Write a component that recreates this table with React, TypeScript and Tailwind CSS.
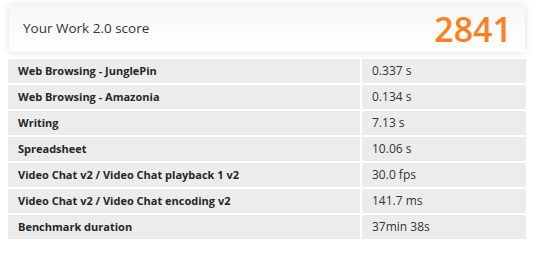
import React from "react";

const rows: [string, string][] = [
  ["Web Browsing - JunglePin", "0.337 s"],
  ["Web Browsing - Amazonia", "0.134 s"],
  ["Writing", "7.13 s"],
  ["Spreadsheet", "10.06 s"],
  ["Video Chat v2 / Video Chat playback 1 v2", "30.0 fps"],
  ["Video Chat v2 / Video Chat encoding v2", "141.7 ms"],
  ["Benchmark duration", "37min 38s"],
];

export default function App() {
  return (
    <div
      className="w-[537px] h-[253px] bg-white pt-[5px] overflow-hidden"
      style={{ fontFamily: '"Open Sans", sans-serif' }}
    >
      <div className="ml-[9px] w-[516px] h-[47px] rounded-[3px] bg-gradient-to-b from-[#f7f7f7] to-white shadow-[0_0_8px_rgba(0,0,0,0.13)] flex items-center justify-between pl-[14px] pr-[13px]">
        <span className="text-[13.5px] text-[#333333]">Your Work 2.0 score</span>
        <span className="text-[34px] font-semibold text-[#ff7f1f] leading-none">2841</span>
      </div>
      <div className="mt-[7px] ml-[8px] w-[518px] flex flex-col gap-[2px]">
        {rows.map(([label, value]) => (
          <div key={label} className="flex h-[24px] gap-[2px]">
            <div className="w-[352px] bg-[#ececec] flex items-center pl-[10px] text-[11px] font-bold text-[#262626]">
              {label}
            </div>
            <div className="flex-1 bg-[#ececec] flex items-center pl-[10px] text-[12px] text-[#333333]">
              {value}
            </div>
          </div>
        ))}
      </div>
    </div>
  );
}
